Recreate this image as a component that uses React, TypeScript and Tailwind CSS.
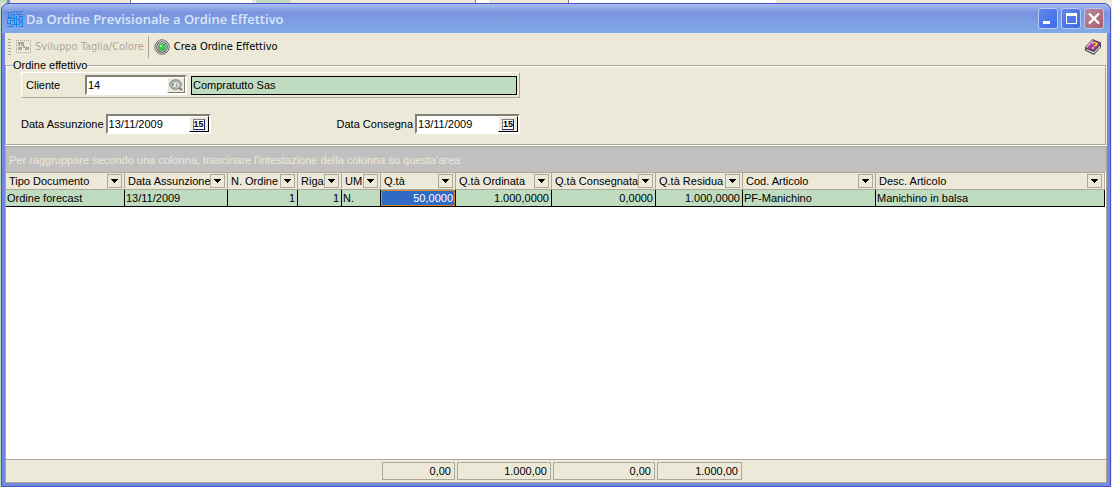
import { type ReactNode } from "react";

type Column = {
  label: string;
  value: string;
  width: string;
  numeric?: boolean;
  total?: string;
  active?: boolean;
};

const columns: Column[] = [
  { label: "Tipo Documento", value: "Ordine forecast", width: "w-[119px]" },
  { label: "Data Assunzione", value: "13/11/2009", width: "w-[103px]" },
  { label: "N. Ordine", value: "1", width: "w-[70px]", numeric: true },
  { label: "Riga", value: "1", width: "w-[44px]", numeric: true },
  { label: "UM", value: "N.", width: "w-[39px]" },
  { label: "Q.tà", value: "50,0000", width: "w-[75px]", numeric: true, total: "0,00", active: true },
  { label: "Q.tà Ordinata", value: "1.000,0000", width: "w-[96px]", numeric: true, total: "1.000,00" },
  { label: "Q.tà Consegnata", value: "0,0000", width: "w-[104px]", numeric: true, total: "0,00" },
  { label: "Q.tà Residua", value: "1.000,0000", width: "w-[87px]", numeric: true, total: "1.000,00" },
  { label: "Cod. Articolo", value: "PF-Manichino", width: "w-[133px]" },
  { label: "Desc. Articolo", value: "Manichino in balsa", width: "w-auto" },
];

function AppIcon() {
  return (
    <svg width="16" height="16" viewBox="0 0 16 16" fill="none" stroke="#0d86f0" shapeRendering="crispEdges" aria-hidden="true">
      <path d="M0 1.5h5M7 .5h3v3h5M12 .5h4M1.5 3v3h3V3.5h3v4H0M9.5 5v3h3V5.5h3v4h-5M.5 9v3h3V9.5h4v3M0 15.5h5v-2h4v2M9.5 10v3h3v-1.5h3V15h-4M6.5 0v2M2.5 12v2M7.5 7.5v3M14.5 10v2" />
    </svg>
  );
}

function SizesIcon() {
  return (
    <svg width="15" height="13" viewBox="0 0 15 13" fill="none" shapeRendering="crispEdges" aria-hidden="true">
      <path d="M0 .5h15M0 12.5h15M.5 0v13M14.5 0v13" stroke="#aca899" strokeDasharray="1 1" />
      <path d="M2 2h6v4H2zM2 7h4v3H2zM9 7h4v3H9zM7 6h2v2H7z" fill="#aca899" />
      <path d="M4 4h1v2H4z" fill="#ece9d8" />
    </svg>
  );
}

function TargetIcon() {
  return (
    <svg width="16" height="16" viewBox="0 0 16 16" aria-hidden="true">
      <circle cx="8" cy="8" r="7.2" fill="#f2f2ee" stroke="#5c5c5c" strokeWidth="1" />
      <circle cx="8" cy="8" r="5.3" fill="#dcdcdc" stroke="#555" strokeWidth="1.1" />
      <circle cx="8" cy="8" r="3.7" fill="#3d8a44" />
      <circle cx="8" cy="8" r="3" fill="#2fd044" />
      <circle cx="7" cy="7" r="1.3" fill="#8af592" />
    </svg>
  );
}

function HelpBookIcon() {
  return (
    <svg width="16" height="16" viewBox="0 0 16 16" aria-hidden="true">
      <path d="M0 8 7.500 0 16 3.500V8l-7 8-9-4.500z" fill="#45454f" />
      <path d="m1.500 10 7.500 3.300 6-6.800v1.500l-6 6.500-7.500-3.500z" fill="#f0f0f0" />
      <path d="M1 8.500 7.500 1 15 4 8.700 12z" fill="#a5379f" />
      <path d="M1.500 8.500 7.800 1.300" stroke="#f3c9f0" strokeWidth="1.200" />
      <path d="M7 4.500 9.500 3.500l2.500 1-.8 1.700-2.500.8M7 9h2" stroke="#ffe92e" strokeWidth="1.300" fill="none" />
    </svg>
  );
}

function LookupIcon() {
  return (
    <svg width="14" height="12" viewBox="0 0 14 12" aria-hidden="true">
      <path d="m9 8 4 3" stroke="#777" strokeWidth="2" />
      <ellipse cx="6.500" cy="5.500" rx="5.800" ry="4.800" fill="#b4b6b2" stroke="#858580" />
      <path d="M3 6Q6.500 1.500 10.500 6 6.500 9.500 3 6" fill="#fff" />
      <circle cx="7.500" cy="6" r="1.200" fill="#8a9a86" />
      <circle cx="4" cy="5.500" r="1" fill="#1e8796" />
    </svg>
  );
}

function CaptionButton({ label, tone, children }: { label: string; tone: string; children: ReactNode }) {
  return (
    <button type="button" aria-label={label} className={`flex h-[21px] w-5 items-center justify-center rounded-[3px] border border-[#b9c9f2] ${tone}`}>
      <svg width="14" height="15" viewBox="0 0 14 15" fill="none" stroke="#fff" shapeRendering="crispEdges" aria-hidden="true">
        {children}
      </svg>
    </button>
  );
}

function DateField({ id, label }: { id: string; label: string }) {
  return (
    <div className="flex items-center gap-[2px]">
      <label htmlFor={id}>{label}</label>
      <div className="flex h-5 w-[105px] border-2 border-t-[#808075] border-r-white border-b-white border-l-[#808075] bg-white">
        <input id={id} defaultValue="13/11/2009" className="w-0 flex-1 bg-white pl-px outline-none" />
        <button type="button" aria-label={`Calendario ${label}`} className="flex w-5 items-center justify-center border border-t-white border-r-black border-b-black border-l-white bg-[#ece9d8]">
          <span className="flex h-[11px] w-3 items-center justify-center border border-t-[#808080] border-r-[#1a1a80] border-b-[#1a1a80] border-l-[#808080] bg-white text-[9px] leading-none font-bold">15</span>
        </button>
      </div>
    </div>
  );
}

function HeaderCell({ label, width }: { label: string; width: string }) {
  return (
    <th scope="col" className={`${width} border-y border-[#aca899] p-0 font-normal`}>
      <div className="flex h-4 items-center border-r border-[#aca899] pr-[2px] pl-[3px]">
        <span className="w-0 flex-1 text-left whitespace-nowrap">{label}</span>
        <button type="button" aria-label={`Filtra ${label}`} className="flex h-[14px] w-[15px] items-center justify-center border border-[#aca899]">
          <svg width="7" height="4" viewBox="0 0 7 4" shapeRendering="crispEdges" aria-hidden="true">
            <path d="M0 0h7v1H6v1H5v1H4v1H3V3H2V2H1V1H0z" fill="#000" />
          </svg>
        </button>
      </div>
    </th>
  );
}

export default function App() {
  return (
    <div className="flex min-h-screen flex-col bg-[#ece9d8] bg-[linear-gradient(90deg,#c0dcc0_1px,transparent_1px)] pr-px pl-px font-['Liberation_Sans',sans-serif] text-[11px] leading-[13px] text-black">
      <div className="flex h-[3px] shrink-0" aria-hidden="true">
        <div className="w-[6px] bg-[#c0dcc0]" />
        <div className="w-[3px] bg-[#7287e0]" />
        <div className="w-[121px] border-r border-[#808075]" />
        <div className="w-[121px] bg-white" />
        <div className="ml-1 w-[34px] bg-[#c0dcc0]" />
        <div className="w-[186px] border-r border-[#808075]" />
        <div className="w-[13px] bg-white" />
        <div className="w-20 border-r border-[#808075]" />
        <div className="w-[207px] bg-white" />
      </div>
      <main className="flex flex-1 flex-col rounded-t-[7px] border-x border-t border-b border-[#4a4fc4] bg-[#7287e0]">
        <header className="flex h-[29px] shrink-0 items-center rounded-t-[6px] bg-linear-to-b from-[#a9bff0] from-0% via-[#7793de] via-30% to-[#82a8e8] to-90% pr-[6px] pl-[5px]">
          <AppIcon />
          <h1 className="flex-1 pt-px pl-[3px] font-['Open_Sans',sans-serif] text-[13px] leading-4 font-semibold text-[#dbe5fa]">Da Ordine Previsionale a Ordine Effettivo</h1>
          <div className="flex gap-[3px]">
            <CaptionButton label="Riduci a icona" tone="bg-linear-to-br from-[#6285e6] to-[#3a6cea]">
              <path d="M2 11.500h7" strokeWidth="3" />
            </CaptionButton>
            <CaptionButton label="Ingrandisci" tone="bg-linear-to-br from-[#6285e6] to-[#3a6cea]">
              <path d="M2 3.500h11" strokeWidth="3" />
              <path d="M2.500 4v8.500h10V4" />
            </CaptionButton>
            <CaptionButton label="Chiudi" tone="bg-linear-to-br from-[#b98a9c] to-[#ab5c70]">
              <path d="m2 2.500 10 10M12 2.500l-10 10" strokeWidth="2.400" shapeRendering="auto" />
            </CaptionButton>
          </div>
        </header>
        <div className="mx-[3px] mb-[3px] flex flex-1 flex-col bg-[#ece9d8]">
          <nav aria-label="Comandi" className="flex h-[25px] shrink-0 items-center pt-[2px] pr-[6px] pl-[3px] font-['DejaVu_Sans_Condensed',sans-serif]">
            <div className="mr-[5px] h-4 w-[3px] bg-[repeating-linear-gradient(#aca899_0_1px,transparent_1px_3px)]" />
            <button type="button" disabled className="flex items-center gap-1 text-[#aca899]">
              <SizesIcon />
              Sviluppo Taglia/Colore
            </button>
            <div className="mr-[5px] ml-1 h-[22px] w-px bg-[#aca899]" />
            <button type="button" className="flex flex-1 items-center gap-1">
              <TargetIcon />
              Crea Ordine Effettivo
            </button>
            <button type="button" aria-label="Guida">
              <HelpBookIcon />
            </button>
          </nav>
          <fieldset className="mr-px h-[87px] border border-[#aca899] px-[15px] shadow-[inset_1px_1px_#fff,0_1px_#fff]">
            <legend className="-ml-2 bg-[#ece9d8] pt-px">Ordine effettivo</legend>
            <div className="flex h-[26px] w-[499px] max-w-full items-center border border-t-white border-r-[#aca899] border-b-[#aca899] border-l-white pr-[2px] pl-1">
              <label htmlFor="cliente" className="w-[59px]">Cliente</label>
              <div className="mr-1 flex h-5 w-[102px] border-2 border-t-[#808075] border-r-white border-b-white border-l-[#808075] bg-white">
                <input id="cliente" defaultValue="14" className="w-0 flex-1 bg-white pl-px outline-none" />
                <button type="button" aria-label="Cerca cliente" className="flex w-[18px] items-center justify-center border border-t-white border-r-[#808075] border-b-[#808075] border-l-white bg-[#ece9d8]">
                  <LookupIcon />
                </button>
              </div>
              <input aria-label="Ragione sociale" readOnly defaultValue="Compratutto Sas" className="h-[19px] w-0 flex-1 border border-black bg-[#c0dcc0] pl-px outline-none" />
            </div>
            <div className="mt-4 flex gap-[126px]">
              <DateField id="assunzione" label="Data Assunzione" />
              <DateField id="consegna" label="Data Consegna" />
            </div>
          </fieldset>
          <section className="mt-px flex flex-1 flex-col border border-[#aca899] bg-white" aria-label="Righe ordine">
            <p className="flex h-[25px] shrink-0 items-center bg-[#c0c0c0] pt-[2px] pl-[3px] text-[#ece9d8]">
              Per raggruppare secondo una colonna, trascinare l'intestazione della colonna su questa'area
            </p>
            <div className="flex-1 pr-px">
              <table className="w-full table-fixed border-separate border-spacing-0">
                <thead className="bg-[#ece9d8]">
                  <tr>
                    {columns.map((c) => (
                      <HeaderCell key={c.label} label={c.label} width={c.width} />
                    ))}
                  </tr>
                </thead>
                <tbody className="bg-[#c0dcc0]">
                  <tr>
                    {columns.map((c) => (
                      <td
                        key={c.label}
                        className={`h-[17px] border-r border-b border-black py-0 pr-[2px] pl-px whitespace-nowrap ${c.numeric ? "text-right" : "text-left"} ${c.active ? "bg-[#316ac5] text-white shadow-[inset_0_0_0_1px_#d08a30]" : ""}`}
                      >
                        {c.value}
                      </td>
                    ))}
                  </tr>
                </tbody>
              </table>
            </div>
            <div className="flex h-[23px] shrink-0 border-t border-[#aca899] bg-[#ece9d8] py-[2px]">
              {columns.map((c) => (
                <div key={c.label} className={`${c.width} flex shrink-0 pr-px pl-px`}>
                  {c.total && <output className="flex-1 border border-[#aca899] pr-[3px] text-right leading-4">{c.total}</output>}
                </div>
              ))}
            </div>
          </section>
        </div>
      </main>
    </div>
  );
}
